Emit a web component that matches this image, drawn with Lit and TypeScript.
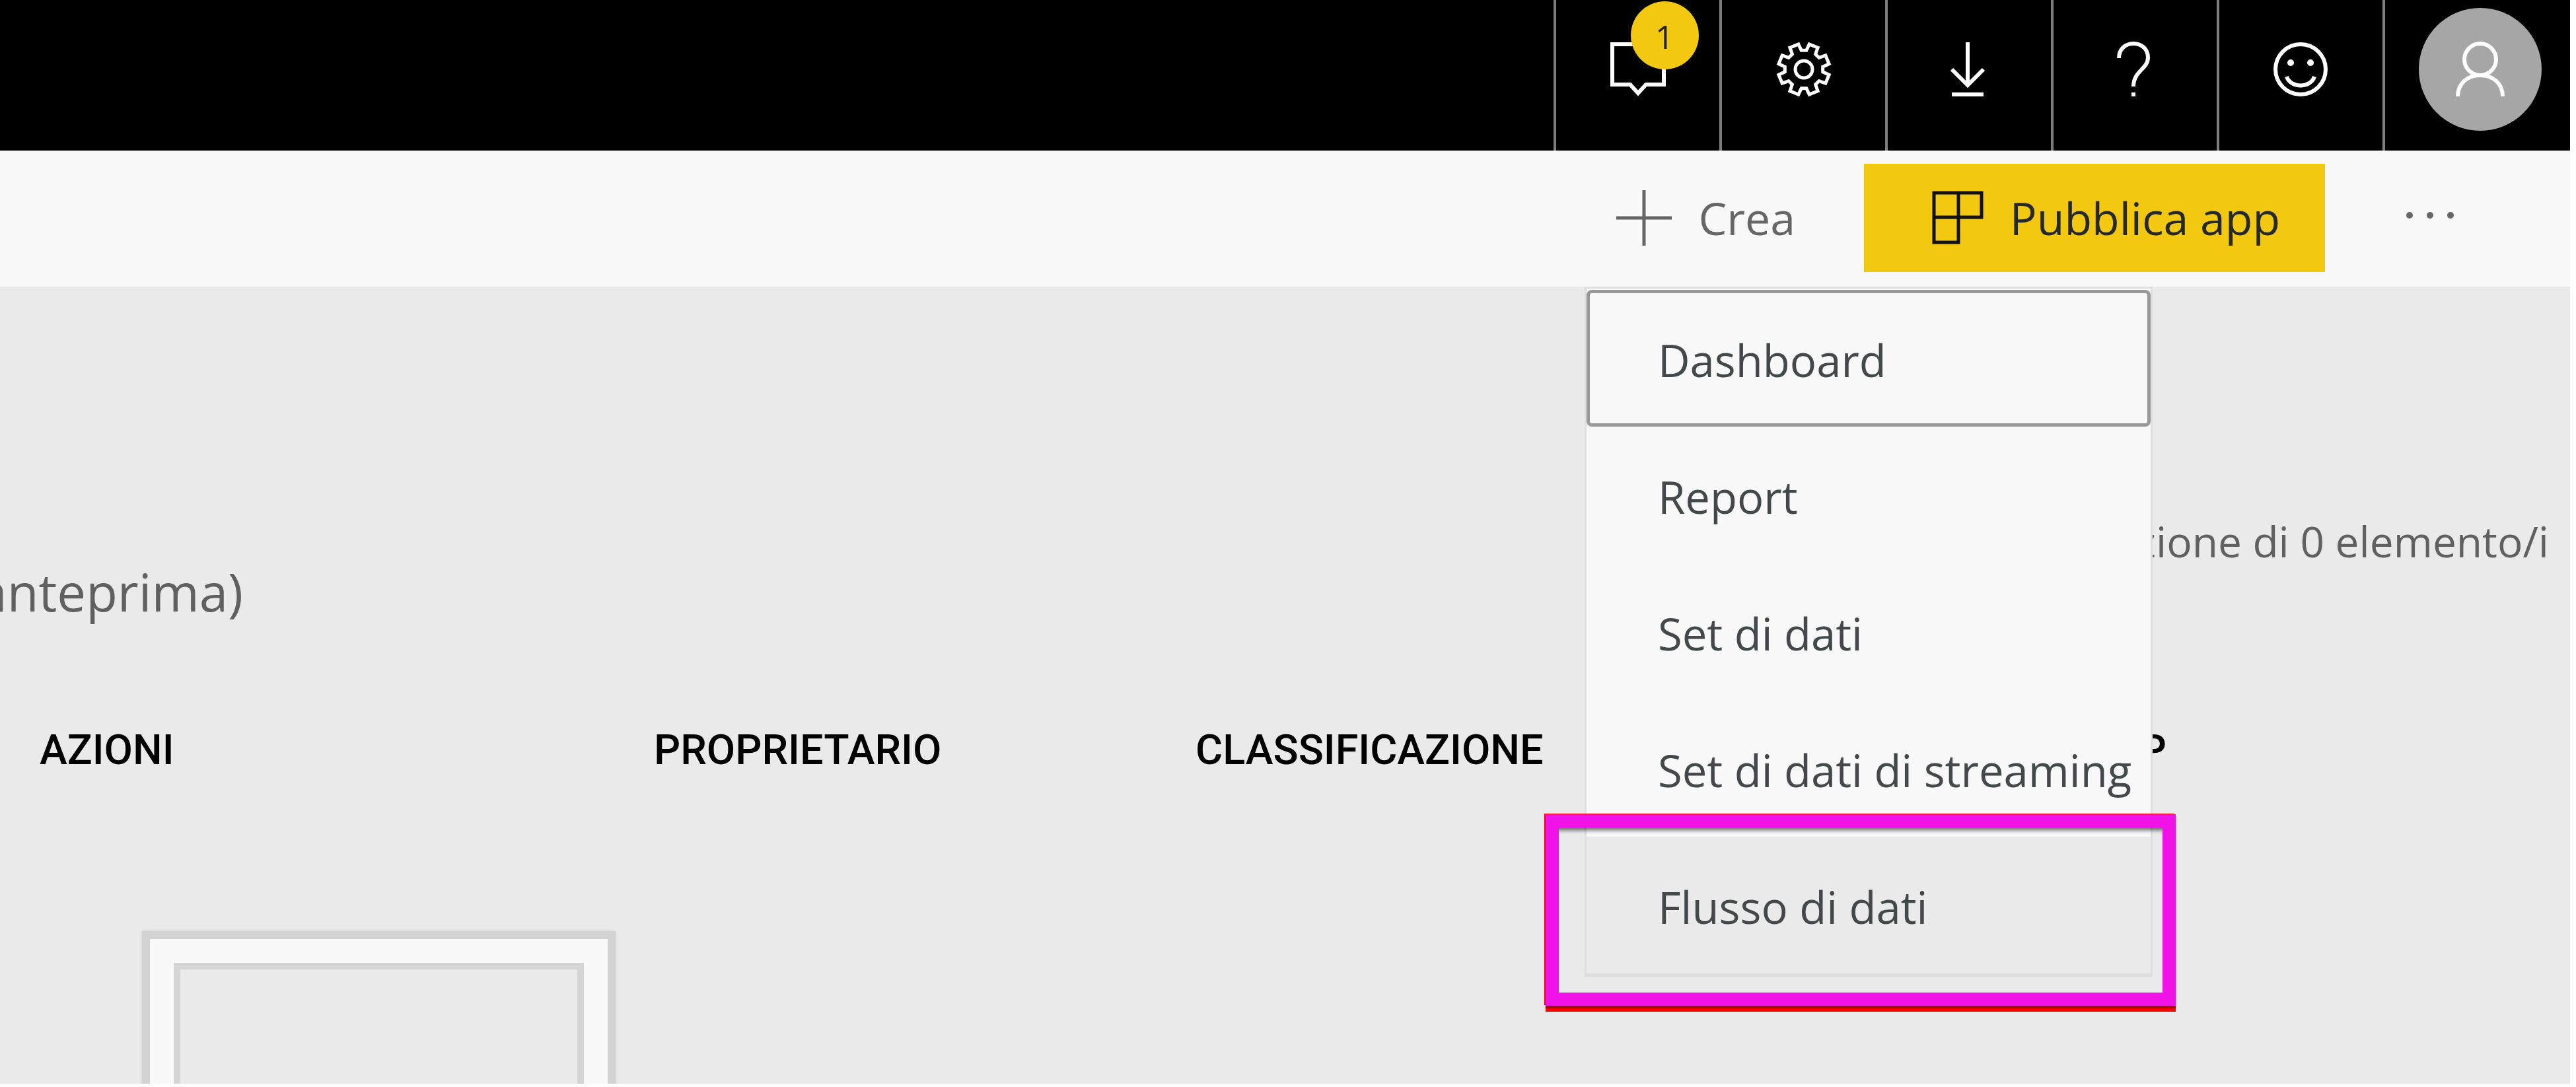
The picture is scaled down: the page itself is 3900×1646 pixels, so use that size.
import { LitElement, html, css, svg } from "lit";
import { customElement } from "lit/decorators.js";

// Outline of an eight-toothed gear centred in an 84-unit box.
const cog = (() => {
  const pts: string[] = [];
  const n = 8;
  for (let i = 0; i < n; i++) {
    const a = (i * 2 * Math.PI) / n + Math.PI / n;
    const p = (r: number, d: number) =>
      `${(42 + r * Math.sin(a + d)).toFixed(1)} ${(42 - r * Math.cos(a + d)).toFixed(1)}`;
    pts.push(p(29, -0.26), p(39, -0.18), p(39, 0.18), p(29, 0.26));
  }
  return "M" + pts.join("L") + "Z";
})();

const icons = {
  chat: svg`<path d="M3 4H81V65H54L42 78L30 65H3Z"/>`,
  cog: svg`<path class="fine" d=${cog}/><circle class="fine" cx="42" cy="42" r="13"/>`,
  download: svg`<path d="M39 1V67M15 42L39 66L63 42M15 80H63"/>`,
  help: svg`<path d="M17 25C17 11 27 3 39 3C52 3 61 12 61 24C61 42 39 44 39 68M39 77V83"/>`,
  smile: svg`<circle cx="41" cy="42" r="38"/><path d="M20 53C26 71 56 71 62 53"/><circle class="solid" cx="26" cy="32" r="5"/><circle class="solid" cx="56" cy="32" r="5"/>`,
  user: svg`<circle cx="42" cy="27" r="24"/><path d="M8 83C8 64 22 51 42 51C62 51 76 64 76 83"/>`,
};

@customElement("app-root")
export class AppRoot extends LitElement {
  static styles = css`
    :host {
      display: block;
      position: relative;
      min-height: 100vh;
      box-sizing: border-box;
      padding: 0 9px 5px 0;
      background: #fff;
      font-family: "Open Sans", "Noto Sans", sans-serif;
      overflow: hidden;
    }
    * { box-sizing: border-box; }
    button { font: inherit; color: inherit; border: 0; background: none; padding: 0; margin: 0; }
    .page { display: flex; flex-direction: column; min-height: calc(100vh - 5px); background: #eaeaea; overflow: hidden; }
    .top { height: 228px; background: #000; display: flex; justify-content: flex-end; }
    .top button { width: 251px; border-left: 4px solid #7f7f7f; display: flex; justify-content: center; padding-top: 63px; }
    .top .account { width: 284px; padding: 12px 0 0 8px; }
    .icon { width: 84px; height: 84px; fill: none; stroke: #fff; stroke-width: 6; overflow: visible; }
    .fine { stroke-width: 5; }
    .solid { fill: #fff; stroke: none; }
    .wrap { position: relative; height: 84px; }
    .badge { position: absolute; left: 31px; top: -61px; width: 103px; height: 103px; border-radius: 50%; background: #f2c811; color: #222; font-size: 50px; line-height: 106px; text-align: center; }
    .avatar { width: 186px; height: 186px; border-radius: 50%; background: #a6a6a6; display: flex; justify-content: center; align-items: center; }
    .bar { height: 206px; background: #f8f8f8; display: flex; justify-content: flex-end; align-items: flex-start; padding-top: 20px; font-size: 68px; line-height: 96px; }
    .create { display: flex; align-items: center; gap: 40px; height: 164px; margin-right: 104px; color: #666; }
    .plus { width: 84px; height: 84px; fill: none; stroke: #666; stroke-width: 5; }
    .publish { display: flex; align-items: center; justify-content: flex-end; gap: 40px; width: 698px; height: 164px; padding-right: 68px; background: #f2c811; color: #25282d; }
    .tiles { width: 78px; height: 82px; fill: none; stroke: #111; stroke-width: 5; }
    .more { width: 371px; height: 156px; display: flex; align-items: center; justify-content: center; padding-right: 54px; }
    .dots { width: 74px; height: 12px; fill: #666; overflow: visible; }
    main { flex: 1; color: #606060; }
    .info { display: flex; justify-content: flex-end; padding: 340px 32px 0 0; font-size: 64px; line-height: 92px; }
    .preview { display: flex; justify-content: flex-end; width: 368px; margin-top: -22px; font-size: 78px; line-height: 104px; white-space: nowrap; }
    table { border-collapse: collapse; margin-top: 140px; width: calc(100% - 611px); table-layout: fixed; }
    th { padding: 0; text-align: left; font-family: "Roboto", sans-serif; font-weight: 500; font-size: 63px; line-height: 96px; color: #000; white-space: nowrap; }
    .c0 { width: 60px; }
    .c1 { width: 930px; }
    .c2 { width: 820px; }
    .last { text-align: right; }
    .frame { width: 717px; height: 300px; margin: 226px 0 -70px 215px; border: 12px solid #d2d2d2; border-bottom: 0; padding: 36px 36px 0; background: #f8f8f8; box-shadow: 0 0 4px #d2d2d2; }
    .pane { height: 260px; border: 10px solid #d5d5d5; background: #eaeaea; }
    .menu { position: absolute; right: 641px; top: 434px; width: 860px; margin: 0; padding: 2px 0 0; list-style: none; background: #f8f8f8; border: 3px solid #dedede; border-bottom-width: 5px; color: #43494b; font-size: 67px; line-height: 92px; }
    .menu button { width: 100%; height: 207px; padding: 4px 0 0 108px; text-align: left; display: block; white-space: nowrap; }
    .menu .focus { border: 5px solid #999; border-radius: 8px; padding-left: 103px; }
    .menu .hover { background: #eaeaea; }
    .mark {
      position: absolute; right: 606px; top: 1233px; width: 954px; height: 290px;
      border: 20px solid #f012e6; pointer-events: none;
      box-shadow: inset 0 9px 6px -5px rgba(0, 0, 0, 0.6), 0 3px 3px rgba(0, 0, 0, 0.5), 0 9px 0 #f00, -2px -1px 0 #f00;
    }
  `;

  private items = ["Dashboard", "Report", "Set di dati", "Set di dati di streaming", "Flusso di dati"];

  private icon(name: keyof typeof icons) {
    return html`<svg class="icon" viewBox="0 0 84 84" aria-hidden="true">${icons[name]}</svg>`;
  }

  render() {
    return html`
      <div class="page">
        <header class="top">
          <button aria-label="Notifiche"><span class="wrap">${this.icon("chat")}<span class="badge">1</span></span></button>
          <button aria-label="Impostazioni">${this.icon("cog")}</button>
          <button aria-label="Scarica">${this.icon("download")}</button>
          <button aria-label="Guida">${this.icon("help")}</button>
          <button aria-label="Commenti">${this.icon("smile")}</button>
          <button class="account" aria-label="Account"><span class="avatar">${this.icon("user")}</span></button>
        </header>
        <nav class="bar">
          <button class="create"><svg class="plus" viewBox="0 0 84 84"><path d="M42 0V84M0 42H84"/></svg>Crea</button>
          <button class="publish"><svg class="tiles" viewBox="0 0 78 82"><path d="M3 3H75V40H3ZM3 40V78H40V3"/></svg>Pubblica app</button>
          <button class="more" aria-label="Altro"><svg class="dots" viewBox="0 0 74 12"><circle cx="6" cy="6" r="5"/><circle cx="37" cy="6" r="5"/><circle cx="68" cy="6" r="5"/></svg></button>
        </nav>
        <main>
          <div class="info">Visualizzazione di 0 elemento/i</div>
          <div class="preview">(anteprima)</div>
          <table>
            <colgroup><col class="c0"><col class="c1"><col class="c2"><col><col></colgroup>
            <thead><tr><th></th><th>AZIONI</th><th>PROPRIETARIO</th><th>CLASSIFICAZIONE</th><th class="last">APP</th></tr></thead>
          </table>
          <div class="frame"><div class="pane"></div></div>
        </main>
      </div>
      <ul class="menu">
        ${this.items.map((t, i) => html`<li><button class=${i === 0 ? "focus" : i === 4 ? "hover" : ""}>${t}</button></li>`)}
      </ul>
      <div class="mark"></div>
    `;
  }
}
